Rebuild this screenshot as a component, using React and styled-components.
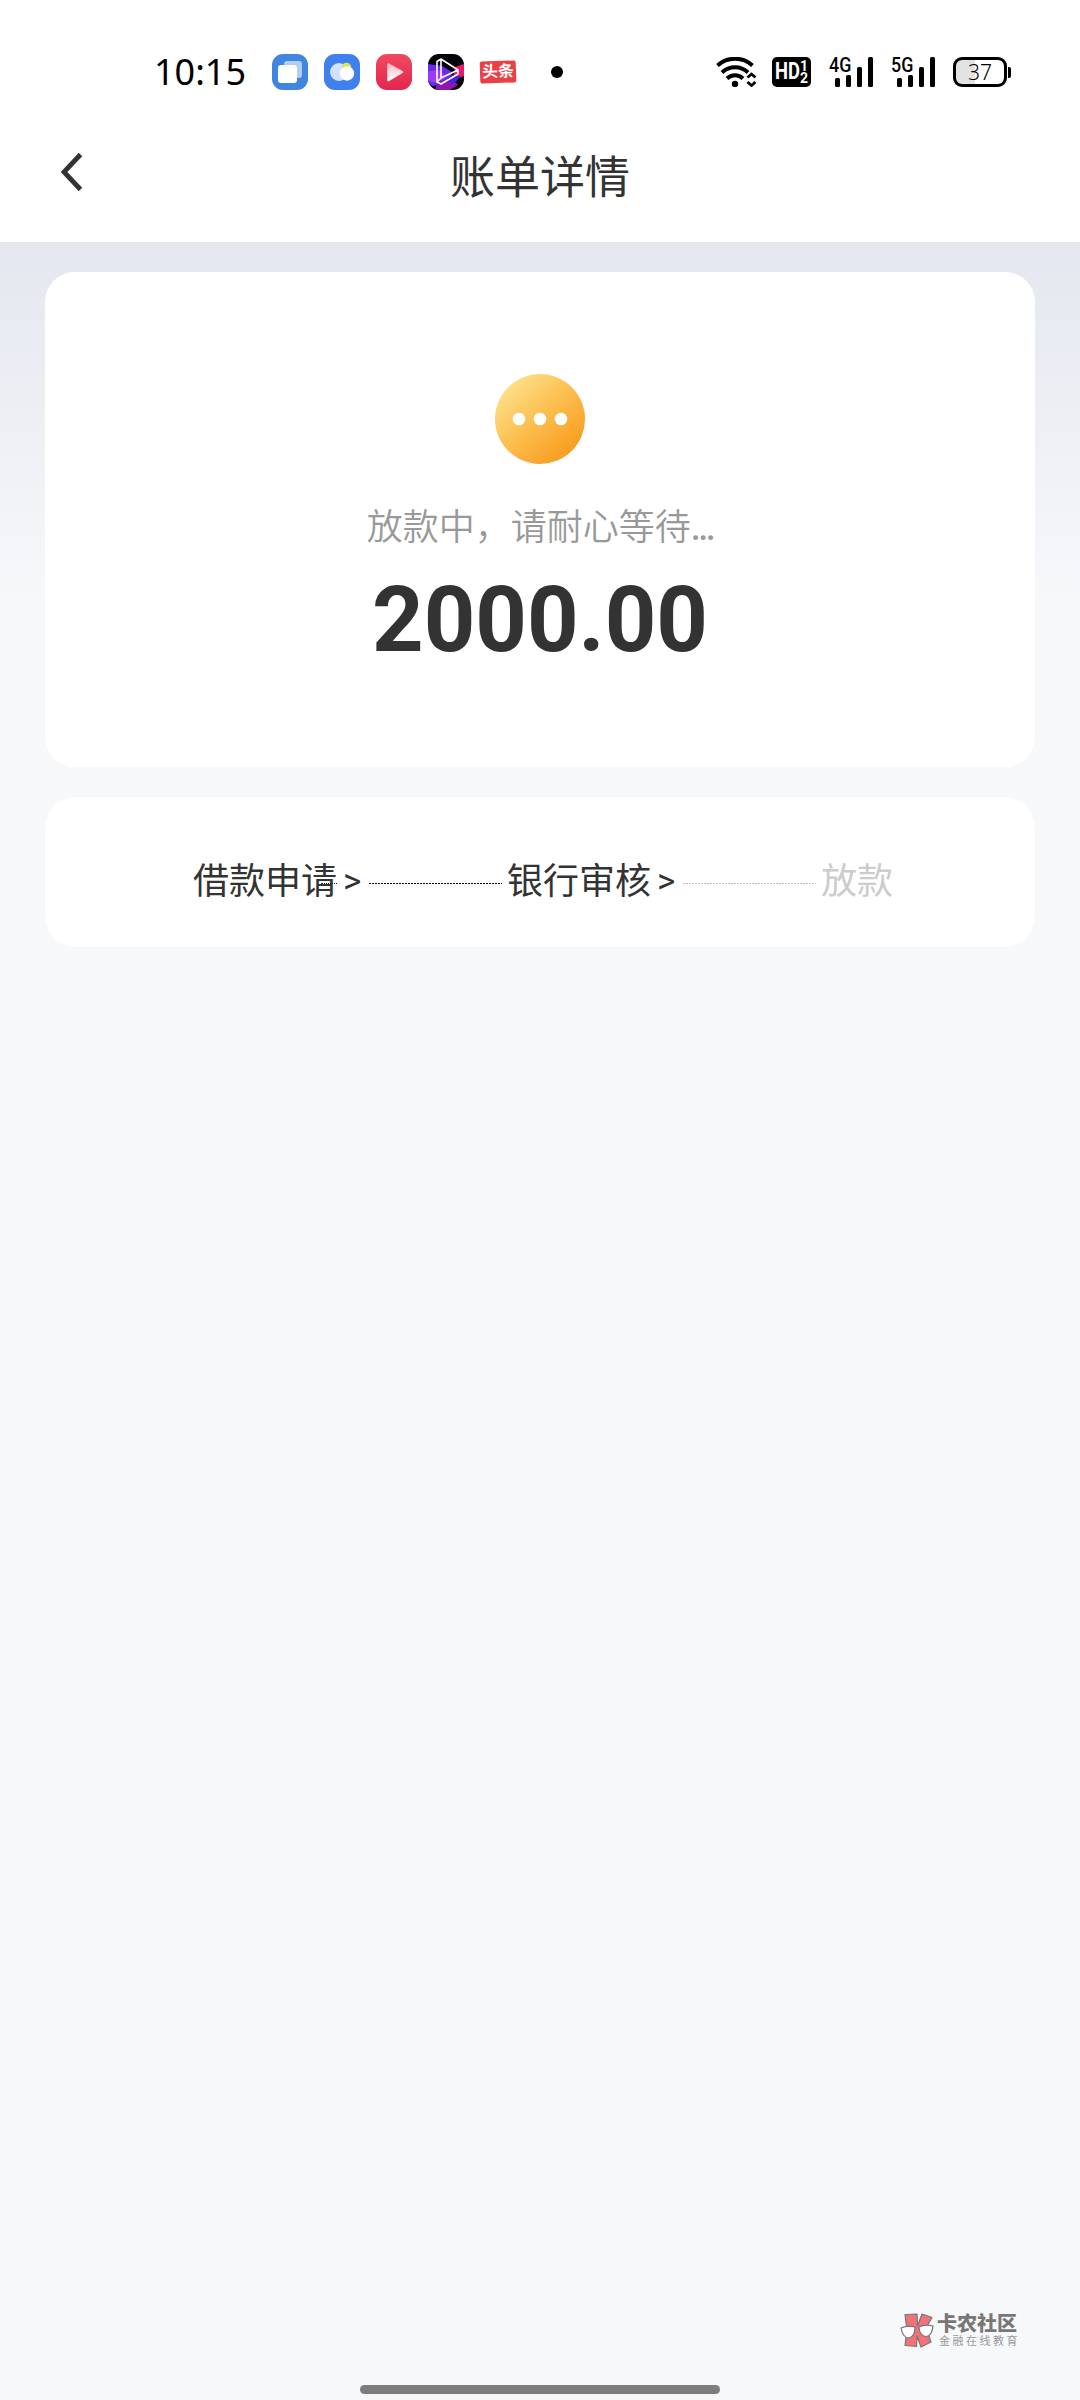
import React from "react";
import styled, { createGlobalStyle } from "styled-components";

const steps = [
  { label: "借款申请", arrow: true, strike: true, line: "#000" },
  { label: "银行审核", arrow: true, line: "#c0c0c0" },
  { label: "放款", pending: true },
];

const Signal = ({ label }) => (
  <SignalBox>
    <SignalLabel>{label}</SignalLabel>
    <svg width="44" height="30" viewBox="0 0 44 30">
      <rect x="6" y="21" width="5" height="9" rx="1.5" />
      <rect x="17" y="18" width="5" height="12" rx="1.5" />
      <rect x="28" y="10" width="5" height="20" rx="1.5" />
      <rect x="39" y="0" width="5" height="30" rx="1.5" />
    </svg>
  </SignalBox>
);

const StatusBar = () => (
  <Status>
    <Time>10:15</Time>
    <Apps>
      <svg width="36" height="36" viewBox="0 0 36 36">
        <rect width="36" height="36" rx="11" fill="#4086e0" />
        <rect x="12" y="7" width="18" height="17" rx="3" fill="#b4cdf5" />
        <rect x="6" y="11" width="19" height="18" rx="3" fill="#fff" />
      </svg>
      <svg width="36" height="36" viewBox="0 0 36 36">
        <rect width="36" height="36" rx="11" fill="#3f80ef" />
        <circle cx="15" cy="18" r="9" fill="#d3e2fc" />
        <circle cx="22.5" cy="13.5" r="4.8" fill="#d5e84a" />
        <circle cx="23" cy="19.5" r="7.2" fill="#fff" />
      </svg>
      <svg width="36" height="36" viewBox="0 0 36 36">
        <defs>
          <linearGradient id="red" x1="0" y1="0" x2="0" y2="1">
            <stop offset="0" stopColor="#f04a60" />
            <stop offset="1" stopColor="#e4254f" />
          </linearGradient>
          <linearGradient id="play" x1="0" y1="0" x2="0" y2="1">
            <stop offset="0" stopColor="#f9b9c3" />
            <stop offset="1" stopColor="#fff" />
          </linearGradient>
        </defs>
        <rect width="36" height="36" rx="11" fill="url(#red)" />
        <path d="M12.5 10.5L26 18L12.5 26z" fill="url(#play)" stroke="url(#play)" strokeWidth="2.5" strokeLinejoin="round" />
      </svg>
      <svg width="36" height="36" viewBox="0 0 36 36">
        <defs>
          <clipPath id="tile">
            <rect width="36" height="36" rx="11" />
          </clipPath>
        </defs>
        <g clipPath="url(#tile)">
          <rect width="36" height="36" fill="#050208" />
          <path d="M0 10L14 12L24 18L20 30L4 32L0 28z" fill="#6a2bf0" />
          <path d="M0 17L12 16L18 23L10 29L0 27z" fill="#9b3cf5" />
          <path d="M27 13L36 10V22L31 24L26 21z" fill="#f0186a" />
          <path d="M10 27L24 25L30 31L22 36H7z" fill="#8a18b0" />
          <path d="M22 21L33 22L27 29L18 28z" fill="#4a20e0" />
        </g>
        <path d="M9 7.5L13 5L30 16V20L13 30L9 28zM13 5V24L30 16M9 28L13 24" fill="none" stroke="#fff" strokeWidth="1.6" strokeLinejoin="round" />
      </svg>
      <Toutiao>头条</Toutiao>
    </Apps>
    <Dot />
    <System>
      <svg width="41" height="30" viewBox="0 0 41 30">
        <g fill="none" stroke="#000" strokeWidth="4">
          <path d="M1.5 8.5A26 26 0 0 1 36.5 8.5" />
          <path d="M6 15.5A19 19 0 0 1 32 15.5" />
          <path d="M11 21.5A11.5 11.5 0 0 1 27 21.5" />
        </g>
        <circle cx="19" cy="27" r="3.2" />
        <path d="M31.5 20.5L35.5 17L39.5 20.5M31.5 25L35.5 28.5L39.5 25" fill="none" stroke="#000" strokeWidth="2.8" />
      </svg>
      <Hd>
        <HdText>HD</HdText>
        <HdNumbers>
          <span>1</span>
          <span>2</span>
        </HdNumbers>
      </Hd>
      <Signal label="4G" />
      <Signal label="5G" />
      <Battery>
        <BatteryBody>37</BatteryBody>
        <BatteryTip />
      </Battery>
    </System>
  </Status>
);

const App = () => {
  return (
    <Page>
      <GlobalStyle />
      <StatusBar />
      <NavBar>
        <svg width="24" height="40" viewBox="0 0 24 40">
          <path d="M21.5 2.5L5 20L21.5 37.5" fill="none" stroke="#333" strokeWidth="4.8" />
        </svg>
        <Title>账单详情</Title>
      </NavBar>
      <Content>
        <AmountCard>
          <svg width="90" height="90" viewBox="0 0 90 90">
            <defs>
              <linearGradient id="coin" x1="0.12" y1="0.12" x2="0.82" y2="0.9">
                <stop offset="0" stopColor="#fee08a" />
                <stop offset="0.5" stopColor="#fcbe4e" />
                <stop offset="1" stopColor="#f89c20" />
              </linearGradient>
            </defs>
            <circle cx="45" cy="45" r="45" fill="url(#coin)" />
            <circle cx="24" cy="45" r="6.3" fill="#fff" />
            <circle cx="45" cy="45" r="6.3" fill="#fff" />
            <circle cx="66" cy="45" r="6.3" fill="#fff" />
          </svg>
          <Tip>
            放款中，请耐心等待<Ellipsis>...</Ellipsis>
          </Tip>
          <Amount>2000.00</Amount>
        </AmountCard>
        <StepCard>
          {steps.map((step) => (
            <React.Fragment key={step.label}>
              <Step $pending={step.pending} $strike={step.strike}>
                {step.label}
              </Step>
              {step.arrow && <Arrow>&gt;</Arrow>}
              {step.line && <Line $color={step.line} />}
            </React.Fragment>
          ))}
        </StepCard>
      </Content>
      <Watermark>
        <svg width="34" height="36" viewBox="0 0 34 36">
          <g fill="#f2717b" stroke="#777" strokeWidth="1.2" strokeLinejoin="round">
            <path d="M5 1.5L17 1L17.5 13L22 1L32 4.5L26 15L31 29L21 34L17 23L16.5 33.5L5 32.5L7 17z" />
          </g>
          <path d="M1 15Q8 12 15 14Q15 24 9 25Q3 25 1 15zM19 14Q25 11 33 13Q32 23 26 23.5Q19.5 23 19 14z" fill="#fff" stroke="#777" strokeWidth="1.2" />
        </svg>
        <div>
          <Brand>卡农社区</Brand>
          <Slogan>金融在线教育</Slogan>
        </div>
      </Watermark>
      <HomeBar />
    </Page>
  );
};

const GlobalStyle = createGlobalStyle`
  body {
    margin: 0;
    font-family: Roboto, "Noto Sans CJK SC", sans-serif;
  }
  svg {
    display: block;
    flex-shrink: 0;
  }
`;

const Page = styled.div`
  display: flex;
  flex-direction: column;
  box-sizing: border-box;
  width: 1080px;
  height: 2400px;
  background: #f7f8fa;
`;

const Status = styled.div`
  display: flex;
  align-items: center;
  height: 144px;
  box-sizing: border-box;
  padding: 0 69px 0 154px;
  background: #fff;
  color: #000;
`;

const Time = styled.div`
  width: 118px;
  font-family: "Noto Sans", sans-serif;
  font-size: 36px;
  line-height: 40px;
`;

const Apps = styled.div`
  display: flex;
  align-items: center;
  gap: 16px;
`;

const Toutiao = styled.div`
  width: 36px;
  height: 22px;
  border-radius: 2px;
  background: #e93f45;
  color: #fff;
  font-size: 16px;
  font-weight: 700;
  line-height: 21px;
  text-align: center;
  transform: rotate(-2deg);
`;

const Dot = styled.div`
  width: 12px;
  height: 12px;
  margin-left: 35px;
  border-radius: 50%;
  background: #000;
`;

const System = styled.div`
  display: flex;
  align-items: center;
  margin-left: auto;
`;

const Hd = styled.div`
  display: flex;
  align-items: center;
  width: 39px;
  height: 30px;
  margin: 0 18px 0 15px;
  padding-left: 3px;
  box-sizing: border-box;
  border-radius: 5px;
  background: #000;
  color: #fff;
`;

const HdText = styled.div`
  width: 25px;
  font-size: 23px;
  font-weight: 700;
  line-height: 30px;
  transform: scaleX(0.8);
  transform-origin: left;
`;

const HdNumbers = styled.div`
  display: flex;
  flex-direction: column;
  font-size: 14px;
  font-weight: 700;
  line-height: 12px;
`;

const SignalBox = styled.div`
  position: relative;
  margin-right: 18px;
`;

const SignalLabel = styled.div`
  position: absolute;
  left: 0;
  top: -2px;
  font-size: 21px;
  font-weight: 500;
  line-height: 20px;
  transform: scaleX(0.85);
  transform-origin: left;
`;

const Battery = styled.div`
  display: flex;
  align-items: center;
`;

const BatteryBody = styled.div`
  width: 54px;
  height: 30px;
  box-sizing: border-box;
  border: 3px solid #000;
  border-radius: 9px;
  background: linear-gradient(90deg, #e3e3e3 19px, #fff 19px);
  font-family: "Noto Sans", sans-serif;
  font-size: 21px;
  font-weight: 350;
  line-height: 24px;
  text-align: center;
`;

const BatteryTip = styled.div`
  width: 3px;
  height: 11px;
  margin-left: 1px;
  border-radius: 0 2px 2px 0;
  background: #000;
`;

const NavBar = styled.div`
  display: flex;
  align-items: center;
  height: 98px;
  box-sizing: border-box;
  padding: 0 59px 42px;
  background: #fff;
`;

const Title = styled.div`
  flex: 1;
  margin-right: 24px;
  padding-top: 13px;
  color: #333;
  font-size: 45px;
  line-height: 50px;
  text-align: center;
`;

const Content = styled.div`
  display: flex;
  flex: 1;
  flex-direction: column;
  gap: 30px;
  padding: 26px 45px 0;
  border-top: 4px solid #e6e7ea;
  background: linear-gradient(#e5e7f0, #f7f8fa 360px);
`;

const AmountCard = styled.div`
  display: flex;
  flex-direction: column;
  align-items: center;
  height: 495px;
  box-sizing: border-box;
  padding-top: 102px;
  border-radius: 30px;
  background: #fff;
`;

const Tip = styled.div`
  margin-top: 37px;
  color: #999;
  font-size: 36px;
  font-weight: 350;
  line-height: 54px;
`;

const Ellipsis = styled.span`
  font-weight: 500;
  letter-spacing: -2.5px;
`;

const Amount = styled.div`
  margin-top: 13px;
  color: #333;
  font-size: 90px;
  font-weight: 700;
  line-height: 106px;
`;

const StepCard = styled.div`
  display: flex;
  align-items: center;
  height: 150px;
  box-sizing: border-box;
  padding: 20px 0 0 148px;
  border-radius: 30px;
  background: #fff;
`;

const Step = styled.div`
  position: relative;
  color: ${(props) => (props.$pending ? "#ccc" : "#333")};
  font-size: 36px;
  line-height: 54px;

  &::after {
    content: "";
    display: ${(props) => (props.$strike ? "block" : "none")};
    position: absolute;
    right: 0;
    top: 28px;
    width: 16px;
    border-top: 1px dotted #222;
  }
`;

const Arrow = styled.div`
  width: 32px;
  padding-left: 6px;
  box-sizing: border-box;
  color: #333;
  font-size: 35px;
  line-height: 54px;
`;

const Line = styled.div`
  width: 133px;
  height: 1px;
  margin: 3px 5px 0 0;
  background: repeating-linear-gradient(90deg, ${(props) => props.$color} 0 2px, #fff 2px 3px);
`;

const Watermark = styled.div`
  display: flex;
  align-self: flex-end;
  gap: 3px;
  height: 36px;
  margin: 0 60px 36px 0;
`;

const Brand = styled.div`
  color: #777;
  font-size: 20px;
  font-weight: 900;
  line-height: 22px;
`;

const Slogan = styled.div`
  padding-left: 2px;
  color: #999;
  font-size: 11px;
  letter-spacing: 2.5px;
  line-height: 14px;
`;

const HomeBar = styled.div`
  align-self: center;
  width: 360px;
  height: 9px;
  margin-bottom: 6px;
  border-radius: 5px;
  background: #7d7d7d;
`;

export default App;
